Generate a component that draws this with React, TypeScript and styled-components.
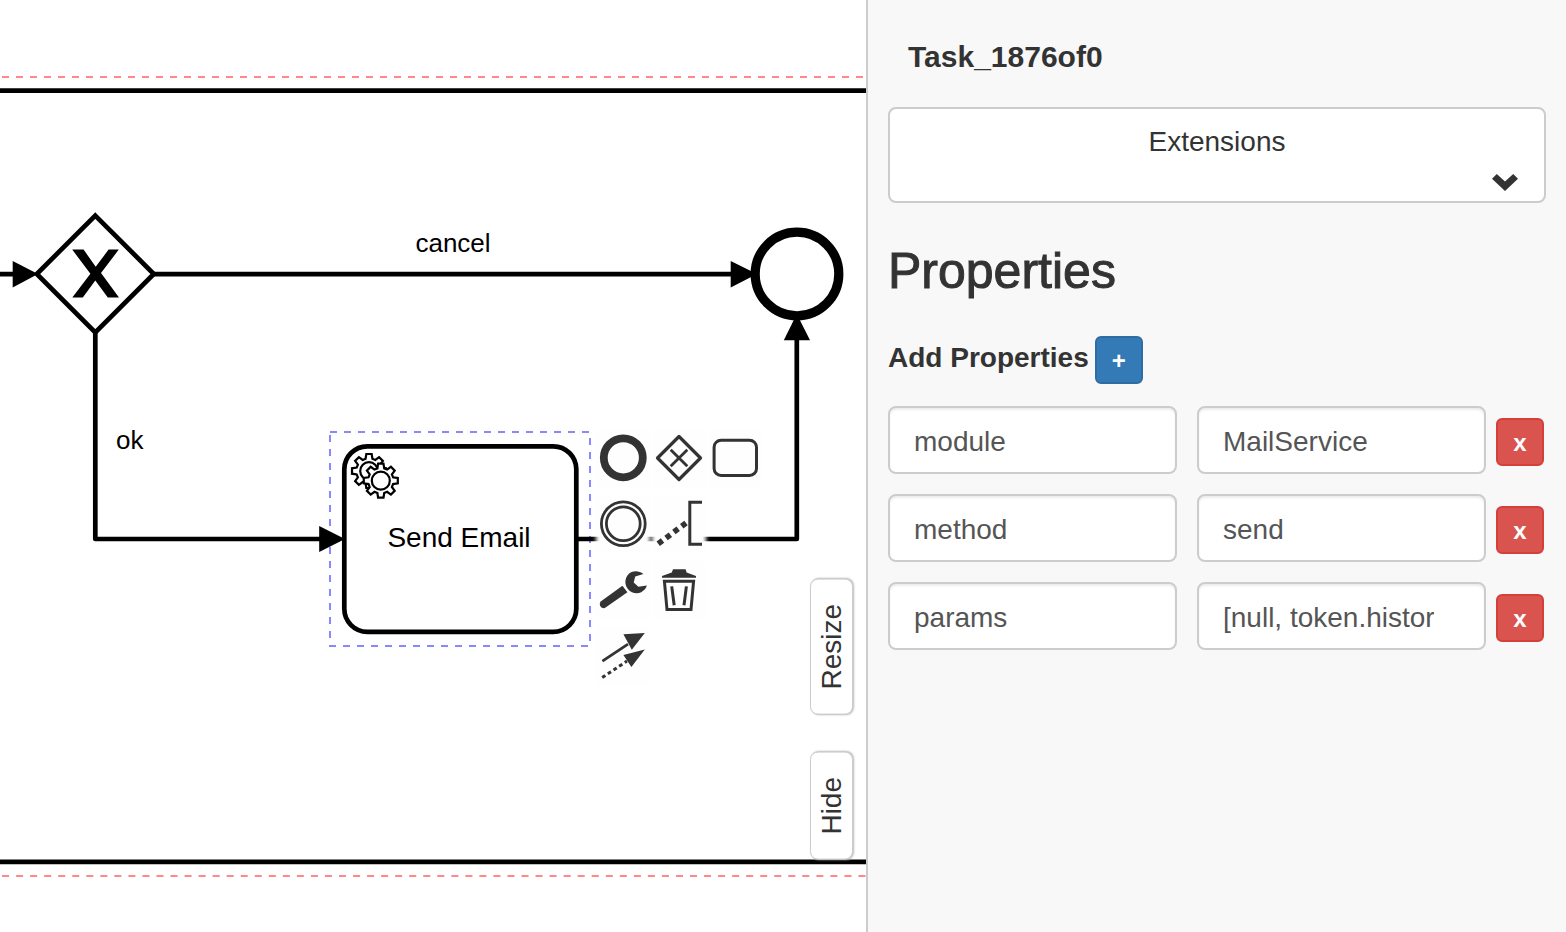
import React, { useState } from "react";
import styled, { createGlobalStyle } from "styled-components";

const GlobalStyle = createGlobalStyle`
  *, *::before, *::after { box-sizing: border-box; }
  body {
    margin: 0;
    background: #fff;
    color: #333;
    font-family: "Liberation Sans", Arial, sans-serif;
    font-size: 28px;
    line-height: 40px;
  }
  button, input { font-family: inherit; margin: 0; }
`;

const Page = styled.div`
  display: flex;
  min-height: 100vh;
`;

/* ---------- modeler canvas ---------- */

const Canvas = styled.main`
  position: relative;
  flex: 1;
  min-width: 0;
  overflow: hidden;
  background: #fff;
`;

const Drawing = styled.svg`
  position: absolute;
  inset: 0;
  width: 100%;
  height: 100%;
`;

const DiagramText = styled.text<{ $size: number }>`
  font-family: "Liberation Sans", Arial, sans-serif;
  font-size: ${(p) => p.$size}px;
  fill: #000;
`;

const ContextPad = styled.div`
  position: absolute;
  left: 600px;
  top: 433px;
  display: flex;
  flex-direction: column;
  gap: 16px;
`;

const PadRow = styled.div`
  display: flex;
  gap: 10px;
`;

const PadButton = styled.button`
  width: 46px;
  height: 50px;
  padding: 0;
  border: 0;
  background: #fefefe;
  box-shadow: 0 0 4px 4px #fefefe;
  color: #333;
  cursor: pointer;

  svg {
    display: block;
    overflow: visible;
    fill: none;
    stroke: currentColor;
    stroke-width: 3;
  }
`;

const SideTabs = styled.div`
  position: absolute;
  right: 13px;
  bottom: 72px;
  display: flex;
  flex-direction: column;
  gap: 38px;
`;

const SideTab = styled.button`
  width: 43px;
  padding: 24px 0;
  border: 1px solid #ccc;
  border-radius: 8px;
  background: #fff;
  box-shadow: -1px 0 2px #bbb;
  color: #333;
  font-size: 28px;
  line-height: 41px;
  writing-mode: vertical-rl;
  transform: rotate(180deg);
  cursor: pointer;
`;

function gearPath(cx: number, cy: number, outer: number, inner: number) {
  const teeth = 8;
  const pts: string[] = [];
  for (let i = 0; i < teeth; i++) {
    const mid = (i * 2 * Math.PI) / teeth;
    const corners: [number, number][] = [
      [inner, -0.27],
      [outer, -0.16],
      [outer, 0.16],
      [inner, 0.27],
    ];
    corners.forEach(([r, da]) => {
      pts.push(`${(cx + r * Math.cos(mid + da)).toFixed(1)} ${(cy + r * Math.sin(mid + da)).toFixed(1)}`);
    });
  }
  return `M${pts.join("L")}Z`;
}

function Diagram() {
  return (
    <Drawing role="img" aria-label="Process diagram">
      <g stroke="#ff8888" strokeWidth="2" strokeDasharray="7 7">
        <line x1="2" y1="77" x2="100%" y2="77" />
        <line x1="-12" y1="876" x2="100%" y2="876" strokeDasharray="7.02 7.02" />
      </g>
      <rect x="330" y="432" width="260" height="214" fill="none" stroke="#8888ff" strokeWidth="2" strokeDasharray="7 7" />
      <g stroke="#000" strokeWidth="4.7" fill="none">
        <line x1="0" y1="90.6" x2="100%" y2="90.6" />
        <line x1="0" y1="861.9" x2="100%" y2="861.9" />
        <path d="M0 274.2H20M153 274.2H740M95.3 332V539H325M576 539H796.8V335" strokeLinejoin="round" />
        <path d="M95.3 215.6L153.8 274L95.3 332.4L36.8 274Z" fill="#fff" />
        <circle cx="797" cy="274" r="41.8" strokeWidth="9.2" fill="#fff" />
        <rect x="344.3" y="446.3" width="232" height="185.5" rx="23" fill="#fff" />
      </g>
      <g fill="#000">
        <path d="M12.7 261L38 274L12.7 287.5Z" />
        <path d="M730.7 261L757 274L730.7 287.5Z" />
        <path d="M783.8 340.3L796.8 314L810 340.3Z" />
        <path d="M319.2 526L345 539L319.2 552Z" />
        <path d="M72.2 249.6H83.6L95.7 266.8L108.6 249.6H118.8L101 273L119 297.6H107.8L95.3 280.6L82.8 297.6H72.3L90.4 273.8Z" />
      </g>
      <g fill="#fff" stroke="#000" strokeWidth="2.2">
        <path d={gearPath(369, 471, 17.2, 12.8)} />
        <circle cx="369" cy="471" r="8.8" />
        <path d={gearPath(380.8, 480.7, 17.2, 12.8)} />
        <circle cx="380.8" cy="480.7" r="9" />
      </g>
      <DiagramText $size={26} x="453" y="252" textAnchor="middle">cancel</DiagramText>
      <DiagramText $size={26} x="116" y="449">ok</DiagramText>
      <DiagramText $size={28} x="459" y="547" textAnchor="middle">Send Email</DiagramText>
    </Drawing>
  );
}

const padRows: { label: string; icon: React.ReactNode }[][] = [
  [
    { label: "Append end event", icon: <circle cx="23.3" cy="24.8" r="19.5" strokeWidth="7.8" /> },
    {
      label: "Append gateway",
      icon: (
        <>
          <path d="M23 3.5L44.5 25L23 46.5L1.5 25Z" strokeWidth="3.2" strokeLinejoin="round" />
          <path d="M14.7 16.7L31.3 33.3M31.3 16.7L14.7 33.3" strokeWidth="2.8" />
        </>
      ),
    },
    { label: "Append task", icon: <rect x="2.1" y="7.2" width="42.4" height="35.2" rx="7" /> },
  ],
  [
    {
      label: "Append intermediate event",
      icon: (
        <g strokeWidth="2.8">
          <circle cx="23.3" cy="24.8" r="21.9" />
          <circle cx="23.3" cy="24.8" r="16.9" />
        </g>
      ),
    },
    {
      label: "Append text annotation",
      icon: (
        <>
          <path d="M46 3.2H33.8V45.3H46" />
          <path d="M2.2 44.8L31.5 22.8" strokeWidth="5.6" strokeDasharray="5.4 4.4" />
        </>
      ),
    },
  ],
  [
    {
      label: "Change type",
      icon: (
        <g stroke="none" fill="currentColor">
          <path d="M0.7 36.4L22.4 20.8L27.4 27.2L5.6 42.6C3.8 43.8 1.8 43.2 0.6 41.6C-0.4 40-0.5 37.8 0.7 36.4Z" />
          <path d="M43.4 9C38.6 5.2 32 5.4 28.2 9.4C24.8 13.2 24.5 18.8 27.3 23.2C30.4 27.8 36.6 29.6 41.2 27.2C44.6 25.4 46.6 22.6 46.8 20.6L38.4 21.8L33.7 17.4L35.2 11.6Z" />
        </g>
      ),
    },
    {
      label: "Remove",
      icon: (
        <>
          <path d="M17 4.3H29.6L30.6 7.6L40 11V12.7H6V11L15.8 7.6Z" stroke="none" fill="currentColor" />
          <path d="M8.4 16.2H37.6L35 44.6H11Z" />
          <path d="M15.7 21.4L18.2 40.3M30.4 21.4L28 40.3" />
        </>
      ),
    },
  ],
  [
    {
      label: "Connect",
      icon: (
        <>
          <path d="M2.4 30.2L28 13.2" strokeWidth="2.8" />
          <path d="M2.2 46.6L27 30" strokeDasharray="3.8 3" />
          <path d="M44.8 2L23.4 3.3L31.8 18.8ZM44.8 18.6L23.4 24L31.4 36Z" stroke="none" fill="currentColor" />
        </>
      ),
    },
  ],
];

/* ---------- properties panel ---------- */

const Panel = styled.aside`
  flex: 0 0 700px;
  min-width: 0;
  padding: 37px 20px;
  border-left: 2px solid #ccc;
  background: #f8f8f8;
`;

const ElementId = styled.h1`
  margin: 0 20px 30px;
  font-size: 30px;
  line-height: 40px;
`;

const SectionToggle = styled.button`
  display: flex;
  flex-direction: column;
  align-items: center;
  width: 100%;
  height: 96px;
  padding: 13px 26px 10px;
  border: 2px solid #ccc;
  border-radius: 8px;
  background: #fff;
  color: #333;
  font-size: 28px;
  line-height: 40px;
  cursor: pointer;

  svg {
    align-self: flex-end;
    margin-top: 12px;
  }
`;

const SectionTitle = styled.h2`
  margin: 40px 0 37px;
  font-size: 50px;
  font-weight: 400;
  line-height: 56px;
  -webkit-text-stroke: 1px #333;
`;

const AddRow = styled.div`
  display: flex;
  gap: 6px;
  margin-bottom: 22px;
`;

const AddLabel = styled.label`
  font-weight: 700;
  line-height: 44px;
`;

const SmallButton = styled.button<{ $danger?: boolean }>`
  width: 48px;
  height: 48px;
  padding: 2px 0 0;
  border: 2px solid ${(p) => (p.$danger ? "#d43f3a" : "#2e6da4")};
  border-radius: 6px;
  background: ${(p) => (p.$danger ? "#d9534f" : "#337ab7")};
  color: #fff;
  font-size: 24px;
  font-weight: 700;
  line-height: 42px;
  cursor: pointer;
`;

const PropertyList = styled.div`
  display: flex;
  flex-direction: column;
  gap: 20px;
`;

const PropertyRow = styled.div`
  display: flex;
  align-items: center;
  padding-right: 2px;

  ${SmallButton} {
    flex: none;
    margin: 4px 0 0 10px;
  }
`;

const TextInput = styled.input`
  flex: 1;
  width: 0;
  min-width: 0;
  height: 68px;
  padding: 15px 50px 11px 24px;
  border: 2px solid #ccc;
  border-radius: 8px;
  background: #fff;
  box-shadow: inset 0 2px 2px rgba(0, 0, 0, 0.075);
  color: #555;
  font-size: 28px;
  line-height: 38px;

  & + & {
    margin-left: 20px;
  }
`;

const initialProperties = [
  { name: "module", value: "MailService" },
  { name: "method", value: "send" },
  { name: "params", value: "[null, token.history]" },
];

export default function App() {
  const [properties, setProperties] = useState(initialProperties);

  const update = (index: number, key: "name" | "value", text: string) =>
    setProperties((list) => list.map((p, i) => (i === index ? { ...p, [key]: text } : p)));

  return (
    <Page>
      <GlobalStyle />
      <Canvas>
        <Diagram />
        <ContextPad>
          {padRows.map((row, i) => (
            <PadRow key={i}>
              {row.map((entry) => (
                <PadButton key={entry.label} type="button" aria-label={entry.label}>
                  <svg width="46" height="50" viewBox="0 0 46 50" aria-hidden="true">
                    {entry.icon}
                  </svg>
                </PadButton>
              ))}
            </PadRow>
          ))}
        </ContextPad>
        <SideTabs>
          <SideTab type="button">Resize</SideTab>
          <SideTab type="button">Hide</SideTab>
        </SideTabs>
      </Canvas>

      <Panel>
        <ElementId>Task_1876of0</ElementId>
        <SectionToggle type="button" aria-expanded="true">
          Extensions
          <svg width="26" height="17" viewBox="0 0 26 17" aria-hidden="true">
            <path d="M0 4.8L4.8 0L13 7.6L21.2 0L26 4.8L13 17Z" fill="#333" />
          </svg>
        </SectionToggle>

        <SectionTitle>Properties</SectionTitle>
        <AddRow>
          <AddLabel htmlFor="add-property">Add Properties</AddLabel>
          <SmallButton
            id="add-property"
            type="button"
            onClick={() => setProperties((list) => [...list, { name: "", value: "" }])}
          >
            +
          </SmallButton>
        </AddRow>

        <PropertyList>
          {properties.map((p, i) => (
            <PropertyRow key={i}>
              <TextInput
                aria-label={`Property ${i + 1} name`}
                value={p.name}
                onChange={(e) => update(i, "name", e.target.value)}
              />
              <TextInput
                aria-label={`Property ${i + 1} value`}
                value={p.value}
                onChange={(e) => update(i, "value", e.target.value)}
              />
              <SmallButton
                $danger
                type="button"
                onClick={() => setProperties((list) => list.filter((_, j) => j !== i))}
              >
                x
              </SmallButton>
            </PropertyRow>
          ))}
        </PropertyList>
      </Panel>
    </Page>
  );
}
